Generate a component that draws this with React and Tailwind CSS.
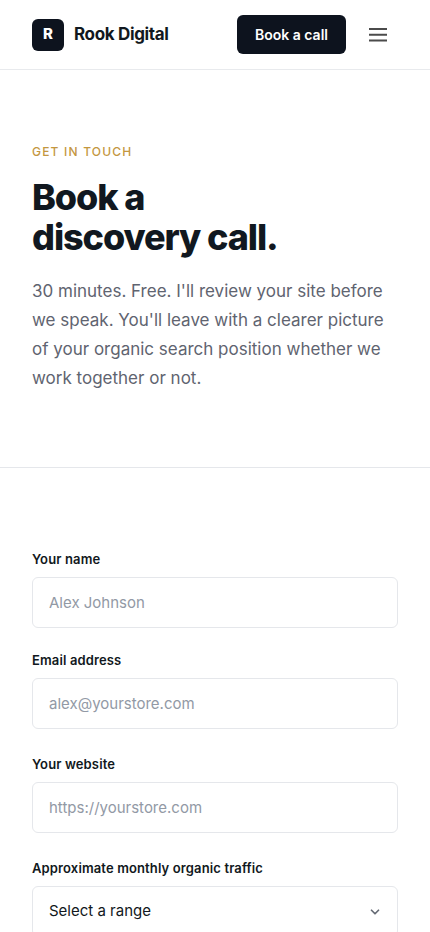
import React, { useState } from "react";
import { ChevronDown } from "lucide-react";

const TRAFFIC_RANGES = [
  "Under 1,000",
  "1,000 – 10,000",
  "10,000 – 50,000",
  "50,000+",
];

const controlStyles =
  "block w-full h-[51px] px-4 rounded-md border border-[#e5e7eb] bg-white text-[15px] text-[#111820] placeholder:text-[#9299a5] focus:outline-none focus:border-[#111820]";

// Label and control pair
const Field = ({ id, label, children }) => {
  return (
    <div className="flex flex-col gap-[7px]">
      <label
        htmlFor={id}
        className="block text-[13px] leading-[22px] font-semibold tracking-[0.01em]"
      >
        {label}
      </label>
      {children}
    </div>
  );
};

const TextField = ({ id, label, type = "text", placeholder }) => {
  return (
    <Field id={id} label={label}>
      <input
        id={id}
        name={id}
        type={type}
        placeholder={placeholder}
        className={controlStyles}
      />
    </Field>
  );
};

const Header = () => {
  return (
    <header className="flex items-center justify-between h-[70px] px-8 border-b border-[#e8eaed]">
      <a href="#home" className="flex items-center gap-[10px]">
        <span className="flex items-center justify-center w-8 h-8 rounded-md bg-[#0d131e] text-white text-[15px] font-extrabold">
          R
        </span>
        <span className="text-[17px] font-bold tracking-[-0.02em]">
          Rook Digital
        </span>
      </a>

      <div className="flex items-center gap-3">
        <a
          href="#contact"
          className="px-[18px] py-[9px] rounded-md bg-[#0d131e] text-white text-[14px] leading-[21px] font-semibold"
        >
          Book a call
        </a>
        <button
          type="button"
          aria-label="Open menu"
          className="flex items-center justify-center w-10 h-10"
        >
          <svg
            width="18"
            height="14"
            viewBox="0 0 18 14"
            fill="#4b4b4b"
            aria-hidden="true"
          >
            <rect width="18" height="2" />
            <rect y="5.75" width="18" height="2" />
            <rect y="11.5" width="18" height="2" />
          </svg>
        </button>
      </div>
    </header>
  );
};

const Hero = () => {
  return (
    <section className="px-8 pt-[72px] pb-[74px] border-b border-[#e5e7eb]">
      <p className="text-[12px] leading-[19px] font-medium uppercase tracking-widest text-[#c4973f]">
        Get in touch
      </p>
      <h1 className="mt-4 text-4xl font-extrabold tracking-[-0.03em]">
        Book a<br />
        discovery call.
      </h1>
      <p className="mt-5 text-[17px] leading-[29px] text-[#5f6470]">
        30 minutes. Free. I'll review your site before we speak. You'll leave
        with a clearer picture of your organic search position whether we work
        together or not.
      </p>
    </section>
  );
};

const ContactForm = () => {
  const [traffic, setTraffic] = useState("");

  return (
    <section id="contact" className="px-8 py-20">
      <form className="flex flex-col gap-6">
        <div className="flex flex-col gap-[21px]">
          <TextField id="name" label="Your name" placeholder="Alex Johnson" />
          <TextField
            id="email"
            label="Email address"
            type="email"
            placeholder="alex@yourstore.com"
          />
        </div>
        <TextField
          id="website"
          label="Your website"
          type="url"
          placeholder="https://yourstore.com"
        />
        <Field id="traffic" label="Approximate monthly organic traffic">
          <div className="relative">
            <select
              id="traffic"
              name="traffic"
              value={traffic}
              onChange={(e) => setTraffic(e.target.value)}
              className={`${controlStyles} appearance-none`}
            >
              <option value="">Select a range</option>
              {TRAFFIC_RANGES.map((range) => (
                <option key={range} value={range}>
                  {range}
                </option>
              ))}
            </select>
            <ChevronDown
              className="absolute right-4 inset-y-0 my-auto w-[14px] h-[14px] text-[#666b75] pointer-events-none"
              strokeWidth={3}
              aria-hidden="true"
            />
          </div>
        </Field>
      </form>
    </section>
  );
};

export default function App() {
  return (
    <div className="min-h-screen bg-white font-['Inter',sans-serif] text-[#111820]">
      <Header />
      <main>
        <Hero />
        <ContactForm />
      </main>
    </div>
  );
}
